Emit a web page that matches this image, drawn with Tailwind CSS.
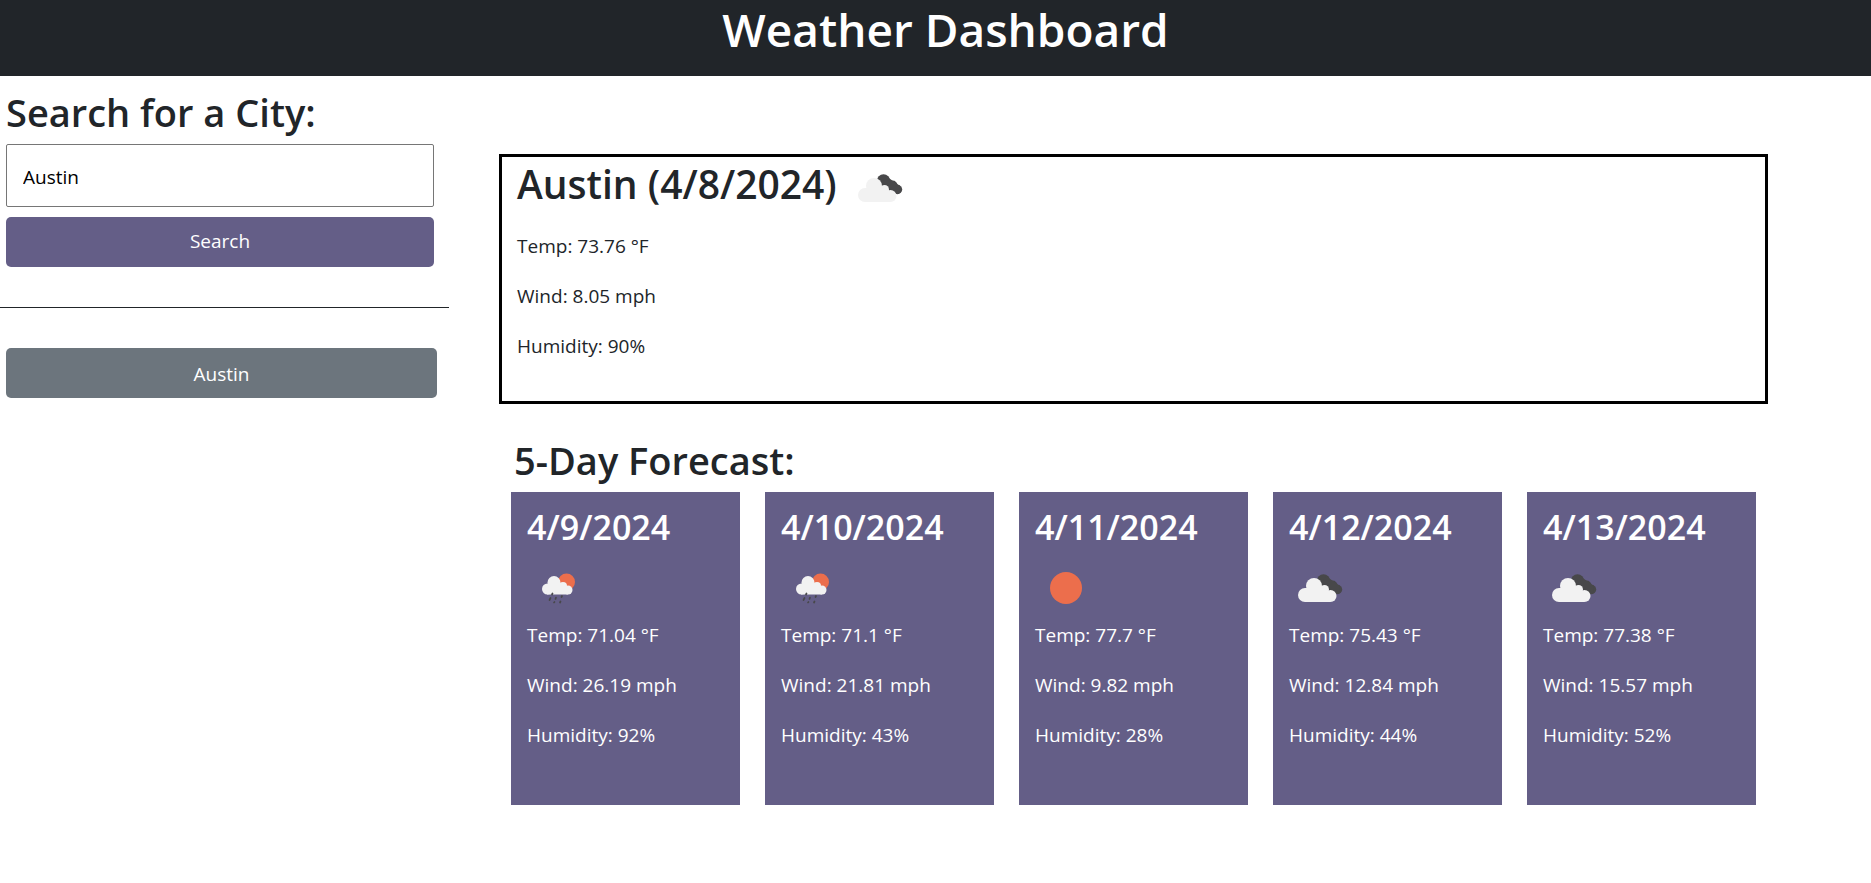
<!DOCTYPE html>
<html lang="en">
<head>
<meta charset="utf-8">
<meta name="viewport" content="width=device-width, initial-scale=1">
<title>Weather Dashboard</title>
<script src="https://cdn.jsdelivr.net/npm/@tailwindcss/browser@4"></script>
</head>
<body class="bg-white font-['Open_Sans',sans-serif] text-[19px] leading-[30px] text-[#212529]">
<svg class="hidden" aria-hidden="true">
  <symbol id="clouds" viewBox="0 0 62 62">
    <g fill="#48484a"><circle cx="34.500" cy="24" r="6.700"/><circle cx="43.500" cy="28.500" r="5"/><circle cx="48.500" cy="32.500" r="4.700"/><path d="M31 29 37 19 44 24 51 29 50 37 44 36 36 31Z"/></g>
    <g fill="#f2f2f2"><circle cx="25" cy="29" r="8"/><circle cx="16" cy="38" r="7"/><circle cx="35.500" cy="32.500" r="4.500"/><circle cx="41.500" cy="39" r="6"/><path d="M16 31H35L41 35V45H16Z"/></g>
  </symbol>
  <symbol id="rain" viewBox="0 0 62 62">
    <circle cx="39.500" cy="25" r="8.500" fill="#ec6e4c"/>
    <g fill="#f2f2f2"><circle cx="27" cy="25.500" r="6.500"/><circle cx="20.500" cy="32" r="5.500"/><circle cx="36" cy="29" r="4"/><circle cx="41" cy="33" r="4.500"/><path d="M20 27H36L41 31V37.500H20Z"/></g>
    <path d="M25.500 36.500 25 37.500M23.500 41 22.500 43M29 40.500 28.500 42M35 39 34.500 40M27.500 45 27 45.500M33.500 44.500 33 45.500" stroke="#48484a" stroke-width="1.700" stroke-linecap="round"/>
  </symbol>
  <symbol id="sun" viewBox="0 0 62 62"><circle cx="31" cy="31" r="16" fill="#ec6e4c"/></symbol>
</svg>

<header class="h-[76px] bg-[#212529] pl-5 text-center text-white">
  <h1 class="text-[46px] leading-[58px] font-semibold">Weather Dashboard</h1>
</header>

<div class="flex items-start">
  <aside class="w-[24%] shrink-0 pt-3">
    <form class="pr-[15px] pl-[6px]" onsubmit="return false">
      <label for="city" class="block text-[38px] leading-12 font-semibold">Search for a City:</label>
      <input id="city" type="text" value="Austin" class="mt-2 block h-[63px] w-full rounded-[2px] border border-[#767676] px-4 pt-[2px] text-black">
      <button type="submit" class="mt-[10px] block h-[50px] w-full rounded-[5px] bg-[#645e87] pb-[2px] text-white">Search</button>
    </form>
    <hr class="my-10 border-t border-[#212529]">
    <div class="pr-3 pl-[6px]">
      <button type="button" class="block h-[50px] w-full rounded-[5px] bg-[#6c757d] pt-[2px] text-white">Austin</button>
    </div>
  </aside>

  <main class="mr-[103px] ml-[50px] flex-1 pt-[78px]">
    <section class="h-[250px] border-3 border-black px-[15px]">
      <div class="flex items-start gap-3">
        <h2 class="text-[39px] leading-[54px] font-semibold">Austin (4/8/2024)</h2>
        <svg class="size-[62px]" role="img" aria-label="Broken clouds"><use href="#clouds"/></svg>
      </div>
      <div class="mt-3 space-y-5">
        <p>Temp: 73.76 °F</p>
        <p>Wind: 8.05 mph</p>
        <p>Humidity: 90%</p>
      </div>
    </section>

    <h2 class="mt-8 pl-[15px] text-[38px] leading-12 font-semibold">5-Day Forecast:</h2>
    <div class="mt-2 grid grid-cols-5 gap-[25px] px-3">
      <article class="h-[313px] bg-[#645e87] px-4 pt-[14px] text-white">
        <h3 class="text-[34px] leading-[42px] font-semibold">4/9/2024</h3>
        <svg class="mt-[9px] mb-px size-[62px]" role="img" aria-label="Rain"><use href="#rain"/></svg>
        <div class="space-y-5"><p>Temp: 71.04 °F</p><p>Wind: 26.19 mph</p><p>Humidity: 92%</p></div>
      </article>
      <article class="h-[313px] bg-[#645e87] px-4 pt-[14px] text-white">
        <h3 class="text-[34px] leading-[42px] font-semibold">4/10/2024</h3>
        <svg class="mt-[9px] mb-px size-[62px]" role="img" aria-label="Rain"><use href="#rain"/></svg>
        <div class="space-y-5"><p>Temp: 71.1 °F</p><p>Wind: 21.81 mph</p><p>Humidity: 43%</p></div>
      </article>
      <article class="h-[313px] bg-[#645e87] px-4 pt-[14px] text-white">
        <h3 class="text-[34px] leading-[42px] font-semibold">4/11/2024</h3>
        <svg class="mt-[9px] mb-px size-[62px]" role="img" aria-label="Clear sky"><use href="#sun"/></svg>
        <div class="space-y-5"><p>Temp: 77.7 °F</p><p>Wind: 9.82 mph</p><p>Humidity: 28%</p></div>
      </article>
      <article class="h-[313px] bg-[#645e87] px-4 pt-[14px] text-white">
        <h3 class="text-[34px] leading-[42px] font-semibold">4/12/2024</h3>
        <svg class="mt-[9px] mb-px size-[62px]" role="img" aria-label="Broken clouds"><use href="#clouds"/></svg>
        <div class="space-y-5"><p>Temp: 75.43 °F</p><p>Wind: 12.84 mph</p><p>Humidity: 44%</p></div>
      </article>
      <article class="h-[313px] bg-[#645e87] px-4 pt-[14px] text-white">
        <h3 class="text-[34px] leading-[42px] font-semibold">4/13/2024</h3>
        <svg class="mt-[9px] mb-px size-[62px]" role="img" aria-label="Broken clouds"><use href="#clouds"/></svg>
        <div class="space-y-5"><p>Temp: 77.38 °F</p><p>Wind: 15.57 mph</p><p>Humidity: 52%</p></div>
      </article>
    </div>
  </main>
</div>
</body>
</html>
